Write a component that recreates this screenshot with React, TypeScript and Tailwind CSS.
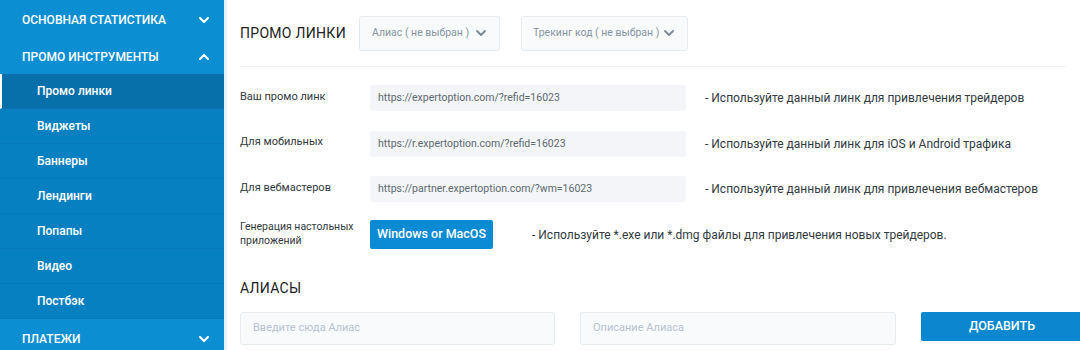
import React from "react";

const Chevron = ({ up = false, color = "white", sw = 2 }: { up?: boolean; color?: string; sw?: number }) => (
  <svg width="10" height="6" viewBox="0 0 10 6" className="shrink-0">
    <polyline
      points={up ? "1,5 5,1 9,5" : "1,1 5,5 9,1"}
      fill="none"
      stroke={color}
      strokeWidth={sw}
      strokeLinecap="round"
      strokeLinejoin="round"
    />
  </svg>
);

const subItems = ["Промо линки", "Виджеты", "Баннеры", "Лендинги", "Попапы", "Видео", "Постбэк"];

const rows = [
  {
    label: "Ваш промо линк",
    url: "https://expertoption.com/?refid=16023",
    desc: "- Используйте данный линк для привлечения трейдеров",
  },
  {
    label: "Для мобильных",
    url: "https://r.expertoption.com/?refid=16023",
    desc: "- Используйте данный линк для iOS и Android трафика",
  },
  {
    label: "Для вебмастеров",
    url: "https://partner.expertoption.com/?wm=16023",
    desc: "- Используйте данный линк для привлечения вебмастеров",
  },
];

export default function App() {
  return (
    <div
      className="flex w-[1080px] h-[350px] overflow-hidden bg-white"
      style={{ fontFamily: "Roboto, 'Noto Sans', sans-serif" }}
    >
      {/* Sidebar */}
      <aside className="w-[224px] shrink-0 flex flex-col bg-[#0780c2] text-white">
        <div className="h-[37px] shrink-0 flex items-center justify-between pl-[22px] pr-[15px] pt-[2px] bg-[#0c8ed3] text-[12px] font-medium uppercase">
          <span>Основная статистика</span>
          <Chevron />
        </div>
        <div className="h-[37px] shrink-0 flex items-center justify-between pl-[22px] pr-[15px] pt-[3px] bg-[#0c8ed3] text-[12px] font-medium uppercase">
          <span>Промо инструменты</span>
          <Chevron up />
        </div>
        {subItems.map((s, i) => (
          <div
            key={s}
            className={
              i === 0
                ? "h-[35px] shrink-0 flex items-center pl-[35px] text-[12px] font-medium bg-[#076fa9] border-l-[2px] border-white border-b border-b-[#0774b2]"
                : "h-[35px] shrink-0 flex items-center pl-[37px] text-[12px] font-medium bg-[#0780c2] border-b border-[#0779b8]"
            }
          >
            {s}
          </div>
        ))}
        <div className="h-[37px] shrink-0 flex items-center justify-between pl-[22px] pr-[15px] pt-[2px] bg-[#0c8ed3] text-[12px] font-medium uppercase">
          <span>Платежи</span>
          <Chevron />
        </div>
      </aside>

      {/* Main */}
      <main className="flex-1 min-w-0 border-l-[3px] border-[#e4f4fd] pl-[13px] pr-[14px] flex flex-col text-[#333a42]">
        <div className="h-[67px] shrink-0 flex items-center border-b border-[#eef0f3]">
          <div className="w-[119px] text-[14px] tracking-[0.3px] text-[#222]">ПРОМО ЛИНКИ</div>
          <div className="w-[141px] h-[35px] flex items-center justify-between pl-[12px] pr-[13px] bg-[#f8fafc] border border-[#e6ebf0] rounded-[3px] text-[10.5px] text-[#8894a1] whitespace-nowrap">
            <span>Алиас ( не выбран )</span>
            <Chevron color="#7a8896" sw={1.8} />
          </div>
          <div className="w-[167px] ml-[21px] h-[35px] flex items-center justify-between pl-[11px] pr-[13px] bg-[#f8fafc] border border-[#e6ebf0] rounded-[3px] text-[10.5px] text-[#8894a1] whitespace-nowrap">
            <span>Трекинг код ( не выбран )</span>
            <Chevron color="#7a8896" sw={1.8} />
          </div>
        </div>

        <div className="flex flex-col gap-[19.5px] pt-[18px]">
          {rows.map((r) => (
            <div key={r.label} className="flex items-center h-[26px]">
              <div className="w-[130px] text-[11px] text-[#333a42] pb-[2px]">{r.label}</div>
              <div className="w-[316px] h-[26px] flex items-center pl-[8px] bg-[#f3f5f8] rounded-[3px] text-[10.5px] text-[#5f6870]">
                {r.url}
              </div>
              <div className="ml-[19px] text-[12px] text-[#333a42] whitespace-nowrap">{r.desc}</div>
            </div>
          ))}
        </div>

        <div className="flex items-center mt-[18px] h-[29px]">
          <div className="w-[130px] text-[10.5px] leading-[14px] text-[#333a42] pb-[2px]">
            Генерация настольных
            <br />
            приложений
          </div>
          <button className="w-[123px] h-[29px] bg-[#0a8bd4] text-white text-[12.5px] font-medium rounded-[2px]">
            Windows or MacOS
          </button>
          <div className="ml-[39px] text-[12px] text-[#333a42] whitespace-nowrap">
            - Используйте *.exe или *.dmg файлы для привлечения новых трейдеров.
          </div>
        </div>

        <div className="mt-[30px] text-[14px] tracking-[0.3px] text-[#222] leading-[18px]">АЛИАСЫ</div>

        <div className="flex items-start mt-[15px]">
          <div className="w-[315px] shrink-0 h-[33px] flex items-center pl-[12px] bg-[#f8fafc] border border-[#e6ebf0] rounded-[3px] text-[11px] text-[#b9c2cc]">
            Введите сюда Алиас
          </div>
          <div className="w-[316px] shrink-0 ml-[25px] h-[33px] flex items-center pl-[12px] bg-[#f8fafc] border border-[#e6ebf0] rounded-[3px] text-[11px] text-[#b9c2cc]">
            Описание Алиаса
          </div>
          <button className="w-[162px] shrink-0 ml-[25px] h-[29px] bg-[#0a87cf] text-white text-[12.5px] font-medium rounded-[2px] uppercase">
            Добавить
          </button>
        </div>
      </main>
    </div>
  );
}
